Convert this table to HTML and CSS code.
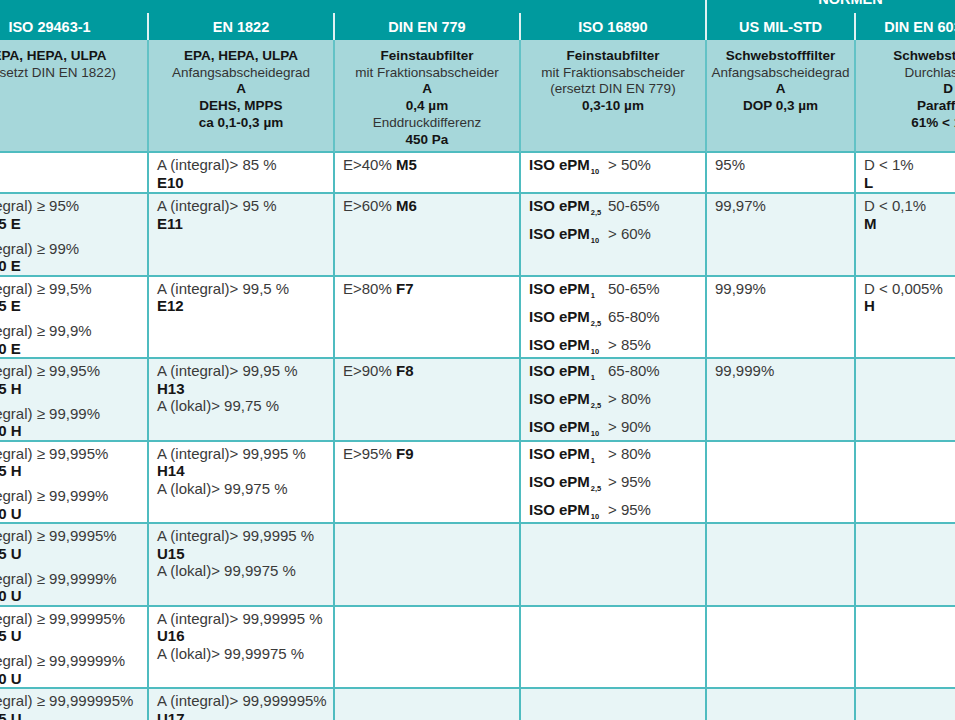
FILE: index.html
```html
<!DOCTYPE html>
<html lang="de">
<head>
<meta charset="utf-8">
<title>Filterklassen – Normen</title>
<link rel="stylesheet" href="styles.css">
</head>
<body>
<div class="viewport">
<table class="norms">
  <colgroup>
    <col class="c-first"><col class="c-wide"><col class="c-wide"><col class="c-wide"><col class="c-narrow"><col class="c-wide">
  </colgroup>
  <thead>
    <tr class="group-row">
      <th colspan="4" class="group"></th>
      <th colspan="2" class="group group-normen">NORMEN</th>
    </tr>
    <tr class="title-row">
      <th>ISO 29463-1</th>
      <th>EN 1822</th>
      <th>DIN EN 779</th>
      <th>ISO 16890</th>
      <th>US MIL-STD</th>
      <th>DIN EN 60335-2-69</th>
    </tr>
    <tr class="desc-row">
      <th><b>EPA, HEPA, ULPA</b><br>(ersetzt DIN EN 1822)</th>
      <th><b>EPA, HEPA, ULPA</b><br>Anfangsabscheidegrad<br><b>A</b><br><b>DEHS, MPPS</b><br><b>ca 0,1-0,3 µm</b></th>
      <th><b>Feinstaubfilter</b><br>mit Fraktionsabscheider<br><b>A</b><br><b>0,4 µm</b><br>Enddruckdifferenz<br><b>450 Pa</b></th>
      <th><b>Feinstaubfilter</b><br>mit Fraktionsabscheider<br>(ersetzt DIN EN 779)<br><b>0,3-10 µm</b></th>
      <th><b>Schwebstofffilter</b><br>Anfangsabscheidegrad<br><b>A</b><br><b>DOP 0,3 µm</b></th>
      <th><b>Schwebstofffilter</b><br>Durchlassgrad<br><b>D</b><br><b>Paraffinöl</b><br><b>61% &lt; 1 µm</b></th>
    </tr>
  </thead>
  <tbody>
    <tr class="row-short">
      <td></td>
      <td>A (integral)&gt; 85 %<br><b>E10</b></td>
      <td>E&gt;40% <b>M5</b></td>
      <td><div class="pm"><span class="pm-label">ISO ePM<sub>10</sub></span>&gt; 50%</div></td>
      <td>95%</td>
      <td>D &lt; 1%<br><b>L</b></td>
    </tr>
    <tr class="alt">
      <td><div class="blk">A (integral) ≥ 95%<br><b>ISO 15 E</b></div><div class="blk">A (integral) ≥ 99%<br><b>ISO 20 E</b></div></td>
      <td>A (integral)&gt; 95 %<br><b>E11</b></td>
      <td>E&gt;60% <b>M6</b></td>
      <td><div class="pm"><span class="pm-label">ISO ePM<sub>2,5</sub></span>50-65%</div><div class="pm"><span class="pm-label">ISO ePM<sub>10</sub></span>&gt; 60%</div></td>
      <td>99,97%</td>
      <td>D &lt; 0,1%<br><b>M</b></td>
    </tr>
    <tr>
      <td><div class="blk">A (integral) ≥ 99,5%<br><b>ISO 25 E</b></div><div class="blk">A (integral) ≥ 99,9%<br><b>ISO 30 E</b></div></td>
      <td>A (integral)&gt; 99,5 %<br><b>E12</b></td>
      <td>E&gt;80% <b>F7</b></td>
      <td><div class="pm"><span class="pm-label">ISO ePM<sub>1</sub></span>50-65%</div><div class="pm"><span class="pm-label">ISO ePM<sub>2,5</sub></span>65-80%</div><div class="pm"><span class="pm-label">ISO ePM<sub>10</sub></span>&gt; 85%</div></td>
      <td>99,99%</td>
      <td>D &lt; 0,005%<br><b>H</b></td>
    </tr>
    <tr class="alt">
      <td><div class="blk">A (integral) ≥ 99,95%<br><b>ISO 35 H</b></div><div class="blk">A (integral) ≥ 99,99%<br><b>ISO 40 H</b></div></td>
      <td>A (integral)&gt; 99,95 %<br><b>H13</b><br>A (lokal)&gt; 99,75 %</td>
      <td>E&gt;90% <b>F8</b></td>
      <td><div class="pm"><span class="pm-label">ISO ePM<sub>1</sub></span>65-80%</div><div class="pm"><span class="pm-label">ISO ePM<sub>2,5</sub></span>&gt; 80%</div><div class="pm"><span class="pm-label">ISO ePM<sub>10</sub></span>&gt; 90%</div></td>
      <td>99,999%</td>
      <td></td>
    </tr>
    <tr>
      <td><div class="blk">A (integral) ≥ 99,995%<br><b>ISO 45 H</b></div><div class="blk">A (integral) ≥ 99,999%<br><b>ISO 50 U</b></div></td>
      <td>A (integral)&gt; 99,995 %<br><b>H14</b><br>A (lokal)&gt; 99,975 %</td>
      <td>E&gt;95% <b>F9</b></td>
      <td><div class="pm"><span class="pm-label">ISO ePM<sub>1</sub></span>&gt; 80%</div><div class="pm"><span class="pm-label">ISO ePM<sub>2,5</sub></span>&gt; 95%</div><div class="pm"><span class="pm-label">ISO ePM<sub>10</sub></span>&gt; 95%</div></td>
      <td></td>
      <td></td>
    </tr>
    <tr class="alt">
      <td><div class="blk">A (integral) ≥ 99,9995%<br><b>ISO 55 U</b></div><div class="blk">A (integral) ≥ 99,9999%<br><b>ISO 60 U</b></div></td>
      <td>A (integral)&gt; 99,9995 %<br><b>U15</b><br>A (lokal)&gt; 99,9975 %</td>
      <td></td><td></td><td></td><td></td>
    </tr>
    <tr>
      <td><div class="blk">A (integral) ≥ 99,99995%<br><b>ISO 65 U</b></div><div class="blk">A (integral) ≥ 99,99999%<br><b>ISO 70 U</b></div></td>
      <td>A (integral)&gt; 99,99995 %<br><b>U16</b><br>A (lokal)&gt; 99,99975 %</td>
      <td></td><td></td><td></td><td></td>
    </tr>
    <tr class="alt">
      <td><div class="blk">A (integral) ≥ 99,999995%<br><b>ISO 75 U</b></div></td>
      <td>A (integral)&gt; 99,999995%<br><b>U17</b><br>A (lokal)&gt; 99,9999 %</td>
      <td></td><td></td><td></td><td></td>
    </tr>
  </tbody>
</table>
</div>
</body>
</html>
```

FILE: styles.css
```css
html, body {
  margin: 0;
  padding: 0;
  background: #ffffff;
}

.viewport {
  width: 955px;
  height: 720px;
  overflow: hidden;
}

.norms {
  margin-top: -17px;
  margin-left: -48px;
  width: 1090px;
  table-layout: fixed;
  border-collapse: separate;
  border-spacing: 0;
  font-family: "Liberation Sans", Arial, sans-serif;
  color: #3a3a3a;
}

.c-first { width: 197px; }
.c-wide { width: 186px; }
.c-narrow { width: 149px; }

.norms b {
  color: #161616;
  font-weight: bold;
}

/* --- header --- */
.group-row { height: 30px; }
.group {
  background: #009a9e;
  color: #ffffff;
  font-size: 14.5px;
  font-weight: bold;
  line-height: 14px;
  vertical-align: top;
  padding: 9px 0 0 0;
  text-align: center;
}
.group:first-child { border-right: 2px solid #dff1f2; }
.group-normen { padding-right: 48px; }

.title-row { height: 27px; }
.title-row th {
  background: #009a9e;
  color: #ffffff;
  font-size: 14.5px;
  font-weight: bold;
  text-align: center;
  vertical-align: middle;
  padding: 0;
  border-right: 2px solid #dff1f2;
  white-space: nowrap;
  overflow: hidden;
}

.desc-row { height: 113px; }
.desc-row th {
  background: #a6d7da;
  font-size: 13.5px;
  font-weight: normal;
  line-height: 16.7px;
  color: #333333;
  text-align: center;
  vertical-align: top;
  padding: 8px 0 0 0;
  border-right: 2px solid #62c2c6;
  border-bottom: 2px solid #4fbcc0;
  white-space: nowrap;
  overflow: hidden;
}
.desc-row th b { color: #141414; }

/* --- body --- */
tbody tr { height: 82.33px; background: #ffffff; }
tbody tr.row-short { height: 41px; }
tbody tr.alt { background: #e8f5f6; }

tbody td {
  font-size: 15px;
  line-height: 17.5px;
  vertical-align: top;
  padding: 3px 6px 0 8px;
  border-right: 2px solid #4fbcc0;
  border-bottom: 2px solid #4fbcc0;
  white-space: nowrap;
  overflow: hidden;
}

.blk + .blk { margin-top: 7.5px; }

.pm {
  line-height: 18px;
  margin-bottom: 10px;
}
.pm:last-child { margin-bottom: 0; }
.pm-label {
  display: inline-block;
  width: 79px;
  font-weight: bold;
  color: #161616;
}
.pm-label sub {
  font-size: 7.5px;
  line-height: 0;
  vertical-align: -4px;
  margin-left: 1px;
}
```
